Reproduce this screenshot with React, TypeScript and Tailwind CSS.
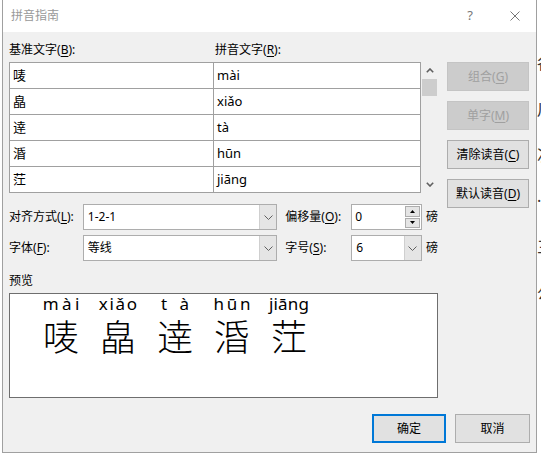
import React from 'react'

const rows: [string, string][] = [
  ['唛', 'mài'],
  ['皛', 'xiǎo'],
  ['逹', 'tà'],
  ['涽', 'hūn'],
  ['茳', 'jiāng'],
]

// pinyin split into letters so 1-2-1 spacing can be done with justify-around
const preview: [string, string[]][] = [
  ['唛', ['m', 'à', 'i']],
  ['皛', ['x', 'i', 'ǎ', 'o']],
  ['逹', ['t', 'à']],
  ['涽', ['h', 'ū', 'n']],
  ['茳', ['j', 'i', 'ā', 'n', 'g']],
]

function Key({ k }: { k: string }) {
  return (
    <>
      (<span className="underline underline-offset-[2px]">{k}</span>)
    </>
  )
}

function Chevron() {
  return (
    <svg width="9" height="5" viewBox="0 0 9 5">
      <polyline points="0.5,0.5 4.5,4.5 8.5,0.5" fill="none" stroke="#606060" strokeWidth="1" />
    </svg>
  )
}

function ScrollArrow({ up }: { up?: boolean }) {
  return (
    <svg width="8" height="5" viewBox="0 0 8 5">
      <polyline
        points={up ? '0.8,4.3 4,1 7.2,4.3' : '0.8,0.7 4,4 7.2,0.7'}
        fill="none"
        stroke="#606060"
        strokeWidth="1.6"
      />
    </svg>
  )
}

function Combo({ value, width }: { value: string; width: string }) {
  return (
    <div className={`flex h-[26px] ${width} border border-[#adadad] bg-white`}>
      <div className="flex flex-1 items-center pl-[4px] text-[12px] text-black">{value}</div>
      <div className="flex w-[17px] items-center justify-center border-l border-[#cfcfcf] bg-[#e5e5e5]">
        <Chevron />
      </div>
    </div>
  )
}

function SideButton({ children, disabled }: { children: React.ReactNode; disabled?: boolean }) {
  return (
    <div
      className={
        disabled
          ? 'flex h-[29px] w-[82px] items-center justify-center border border-[#c4c4c4] bg-[#cccccc] text-[12px] text-[#a0a0a0]'
          : 'flex h-[29px] w-[82px] items-center justify-center border border-[#adadad] bg-[#e1e1e1] text-[12px] text-black'
      }
    >
      {children}
    </div>
  )
}

export default function App() {
  return (
    <div className="flex h-[454px] w-[541px] overflow-hidden bg-white font-['Noto_Sans','Noto_Sans_CJK_SC',sans-serif] text-black">
      <div className="w-[2px]" />

      {/* dialog */}
      <div className="flex h-[453px] w-[535px] flex-col border-x border-b border-[#a0a0a0] bg-[#f0f0f0]">
        {/* title bar */}
        <div className="flex h-[32px] items-center bg-white pl-[8px] pr-[16px]">
          <span className="text-[12px] text-[#999999]">拼音指南</span>
          <span className="ml-auto mr-[37px] text-[13px] text-[#777777]">?</span>
          <svg width="10" height="10" viewBox="0 0 10 10">
            <path d="M0.5 0.5 L9.5 9.5 M9.5 0.5 L0.5 9.5" stroke="#777777" strokeWidth="1" />
          </svg>
        </div>

        {/* body */}
        <div className="flex flex-1 flex-col px-[6px] pt-[9px]">
          <div className="flex">
            {/* left column */}
            <div className="flex w-[429px] flex-col">
              <div className="flex h-[18px] items-center text-[12px]">
                <span className="w-[206px]">
                  基准文字<Key k="B" />:
                </span>
                <span>
                  拼音文字<Key k="R" />:
                </span>
              </div>

              <div className="mt-[3px] flex">
                <div className="w-[412px] border border-[#a0a0a0] bg-white">
                  {rows.map(([han, py], i) => (
                    <div key={han} className={`flex h-[25px] ${i > 0 ? 'box-content border-t border-[#a0a0a0]' : ''}`}>
                      <div className="flex w-[204px] items-center border-r border-[#a0a0a0] pl-[3px] text-[13px]">{han}</div>
                      <div className="flex flex-1 items-center pl-[3px] text-[13px]">{py}</div>
                    </div>
                  ))}
                </div>
                {/* scrollbar */}
                <div className="flex w-[17px] flex-col">
                  <div className="flex h-[17px] items-center justify-center">
                    <ScrollArrow up />
                  </div>
                  <div className="ml-[1px] h-[17px] w-[15px] bg-[#cdcdcd]" />
                  <div className="flex-1" />
                  <div className="flex h-[17px] items-center justify-center">
                    <ScrollArrow />
                  </div>
                </div>
              </div>

              {/* alignment / offset */}
              <div className="mt-[11px] flex items-center text-[12px]">
                <span className="w-[74px]">
                  对齐方式<Key k="L" />:
                </span>
                <Combo value="1-2-1" width="w-[195px]" />
                <span className="ml-[8px] w-[66px]">
                  偏移量<Key k="O" />:
                </span>
                <div className="flex h-[26px] w-[71px] border border-[#adadad] bg-white">
                  <div className="flex flex-1 items-center pl-[3px] text-[12px]">0</div>
                  <div className="mr-[1px] flex w-[15px] flex-col gap-[1px] py-[1px]">
                    <div className="flex flex-1 items-center justify-center border border-[#adadad] bg-[#e5e5e5]">
                      <svg width="5" height="3" viewBox="0 0 5 3">
                        <polygon points="0,3 2.5,0 5,3" fill="#000" />
                      </svg>
                    </div>
                    <div className="flex flex-1 items-center justify-center border border-[#adadad] bg-[#e5e5e5]">
                      <svg width="5" height="3" viewBox="0 0 5 3">
                        <polygon points="0,0 2.5,3 5,0" fill="#000" />
                      </svg>
                    </div>
                  </div>
                </div>
                <span className="ml-[4px]">磅</span>
              </div>

              {/* font / size */}
              <div className="mt-[5px] flex items-center text-[12px]">
                <span className="w-[74px]">
                  字体<Key k="F" />:
                </span>
                <Combo value="等线" width="w-[195px]" />
                <span className="ml-[8px] w-[66px]">
                  字号<Key k="S" />:
                </span>
                <Combo value="6" width="w-[71px]" />
                <span className="ml-[4px]">磅</span>
              </div>

              <div className="mt-[11px] flex h-[18px] items-center text-[12px]">预览</div>
              <div className="mt-[3px] h-[105px] w-[429px] border border-[#6e6e6e] bg-white">
                <div className="flex gap-[17px] pl-[31px]">
                  {preview.map(([han, letters]) => (
                    <div key={han} className="flex w-[40px] flex-col">
                      <div className="flex h-[20px] justify-around text-[17px] leading-[20px]">
                        {letters.map((l, i) => (
                          <span key={i}>{l}</span>
                        ))}
                      </div>
                      <div className="mt-[3px] text-center font-['Noto_Sans_CJK_SC',sans-serif] text-[36px] font-light leading-[36px]">
                        {han}
                      </div>
                    </div>
                  ))}
                </div>
              </div>
            </div>

            {/* right buttons */}
            <div className="ml-[9px] flex flex-col gap-[10px] pt-[21px]">
              <SideButton disabled>
                组合<Key k="G" />
              </SideButton>
              <SideButton disabled>
                单字<Key k="M" />
              </SideButton>
              <SideButton>
                清除读音<Key k="C" />
              </SideButton>
              <SideButton>
                默认读音<Key k="D" />
              </SideButton>
            </div>
          </div>

          {/* bottom buttons */}
          <div className="mt-[16px] flex justify-end gap-[9px] text-[12px]">
            <div className="flex h-[29px] w-[74px] items-center justify-center border-2 border-[#0078d7] bg-[#e1e1e1]">确定</div>
            <div className="flex h-[29px] w-[75px] items-center justify-center border border-[#adadad] bg-[#e1e1e1]">取消</div>
          </div>
        </div>
      </div>

      {/* document behind the dialog */}
      <div className="flex w-[4px] flex-col overflow-hidden pt-[40px] text-[16px] leading-[46px] text-[#333333]">
        <span>各</span>
        <span>川</span>
        <span>次</span>
        <span>·</span>
        <span>三</span>
        <span>公</span>
      </div>
    </div>
  )
}
